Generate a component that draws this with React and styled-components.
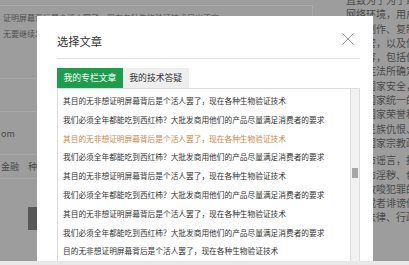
import React from "react";
import styled, { createGlobalStyle } from "styled-components";

const GlobalStyle = createGlobalStyle`
  html, body {
    margin: 0;
    padding: 0;
    background: #e6e6e6;
  }
  body {
    font-family: "Noto Sans CJK SC", "Noto Sans", sans-serif;
  }
`;

const CJK = `"Noto Sans CJK SC", "Noto Sans", sans-serif`;

const articles = [
  { text: "其目的无非想证明屏幕背后是个活人罢了，现在各种生物验证技术" },
  { text: "我们必须全年都能吃到西红柿？大批发商用他们的产品尽量满足消费者的要求" },
  { text: "其目的无非想证明屏幕背后是个活人罢了，现在各种生物验证技术", active: true },
  { text: "我们必须全年都能吃到西红柿？大批发商用他们的产品尽量满足消费者的要求" },
  { text: "其目的无非想证明屏幕背后是个活人罢了，现在各种生物验证技术" },
  { text: "我们必须全年都能吃到西红柿？大批发商用他们的产品尽量满足消费者的要求" },
  { text: "其目的无非想证明屏幕背后是个活人罢了，现在各种生物验证技术" },
  { text: "我们必须全年都能吃到西红柿？大批发商用他们的产品尽量满足消费者的要求" },
  { text: "目的无非想证明屏幕背后是个活人罢了，现在各种生物验证技术" },
];

const sideLines = [
  "直致为了为了避免",
  "网络环境，用户不得",
  "用户制作、复制、发布",
  "和经营，以及传播",
  "的内容，包括但不限于",
  "反对宪法所确定的",
  "危害国家安全，泄露",
  "破坏国家统一的",
  "损害国家荣誉和利益",
  "煽动民族仇恨、民族",
  "破坏国家宗教政策",
];

const sideLines2 = [
  "的散布谣言，扰乱社会",
  "播散布淫秽、色情、赌博",
  "暴力教唆犯罪的",
  "侮辱或者诽谤他人",
  "含有法律、行政法规",
];

function CloseIcon() {
  return (
    <svg width="12" height="12" viewBox="0 0 12 12">
      <path d="M0.5 0.5 L11.5 11.5 M11.5 0.5 L0.5 11.5" stroke="#9a9a9a" strokeWidth="1" fill="none" />
    </svg>
  );
}

export default function App() {
  return (
    <>
      <GlobalStyle />
      <Frame>
        <Stage>
          <Page>
            <LeftCol>
              <NoteBox>
                <NoteLine>证明屏幕背后是个活人罢了，现在各种生物验证技术层出不穷</NoteLine>
                <NoteLine>无要继续发展</NoteLine>
              </NoteBox>
              <Band $h={36} />
              <Band $h={32} />
              <Band $h={42}>
                <BandText>om</BandText>
              </Band>
              <Band $h={23}>
                <BandText>金融　种植</BandText>
              </Band>
              <DarkBlockRow>
                <DarkBlock />
              </DarkBlockRow>
            </LeftCol>
            <SideText>
              <SidePara>
                {sideLines.map((l, i) => (
                  <SideLine key={i}>{l}</SideLine>
                ))}
              </SidePara>
              <SidePara $gap>
                {sideLines2.map((l, i) => (
                  <SideLine key={i}>{l}</SideLine>
                ))}
              </SidePara>
            </SideText>
          </Page>

          <Modal>
            <Header>
              <Title>选择文章</Title>
              <CloseBtn>
                <CloseIcon />
              </CloseBtn>
            </Header>
            <Tabs>
              <Tab $active>我的专栏文章</Tab>
              <Tab>我的技术答疑</Tab>
            </Tabs>
            <ListBox>
              <List>
                {articles.map((a, i) => (
                  <Item key={i} $active={a.active}>
                    {a.text}
                  </Item>
                ))}
              </List>
              <Track>
                <Thumb />
              </Track>
            </ListBox>
          </Modal>
        </Stage>
        <BottomStrip />
      </Frame>
    </>
  );
}

const Frame = styled.div`
  width: 409px;
  height: 265px;
  display: flex;
  flex-direction: column;
  overflow: hidden;
`;

const Stage = styled.div`
  position: relative;
  flex: 1;
  overflow: hidden;
  background: #9d9d9d;
`;

const BottomStrip = styled.div`
  height: 4px;
  background: #e8e8e8;
`;

const Page = styled.div`
  display: grid;
  grid-template-columns: 346px 1fr;
  height: 100%;
`;

const LeftCol = styled.div`
  padding-top: 5px;
`;

const NoteBox = styled.div`
  height: 37px;
  width: 313px;
  padding: 4px 3px 0;
  box-sizing: border-box;
  border-top: 1px solid #a9a9a9;
  border-right: 1px solid #a9a9a9;
`;

const NoteLine = styled.div`
  font-family: ${CJK};
  font-size: 8px;
  line-height: 16px;
  color: #4f4f4f;
  white-space: nowrap;
  overflow: hidden;
`;

const Band = styled.div`
  height: ${(p) => p.$h}px;
  border-bottom: 1px solid #a7a7a7;
  display: flex;
  align-items: center;
`;

const BandText = styled.span`
  font-family: ${CJK};
  font-size: 9px;
  color: #4a4a4a;
  padding-left: 1px;
`;

const DarkBlockRow = styled.div`
  padding: 28px 0 0 28px;
`;

const DarkBlock = styled.div`
  width: 20px;
  height: 23px;
  background: #575757;
`;

const SideText = styled.div`
  margin-top: -7px;
  overflow: hidden;
`;

const SidePara = styled.div`
  margin-top: ${(p) => (p.$gap ? 3 : 0)}px;
`;

const SideLine = styled.div`
  font-family: ${CJK};
  font-size: 10px;
  line-height: 14.3px;
  color: #4a4a4a;
  white-space: nowrap;
`;

const Modal = styled.div`
  position: absolute;
  left: 37px;
  top: 16px;
  width: 336px;
  height: 260px;
  box-sizing: border-box;
  padding: 0 13px 0 20px;
  background: #ffffff;
`;

const Header = styled.div`
  display: flex;
  justify-content: space-between;
  align-items: center;
  padding: 18px 0 10px;
  border-bottom: 1px solid #e3e3e3;
`;

const Title = styled.div`
  font-family: ${CJK};
  font-size: 11.25px;
  line-height: 14px;
  color: #333333;
`;

const CloseBtn = styled.div`
  display: flex;
  margin: -4px 6px 0 0;
`;

const Tabs = styled.div`
  display: flex;
  margin-top: 9px;
`;

const Tab = styled.div`
  height: 20px;
  padding: 0 6.5px;
  font-family: ${CJK};
  font-size: 8.8px;
  line-height: 20px;
  color: ${(p) => (p.$active ? "#ffffff" : "#333333")};
  background: ${(p) => (p.$active ? "#1c9d4c" : "#eeeeee")};
`;

const ListBox = styled.div`
  display: grid;
  grid-template-columns: 1fr 9px;
  height: 200px;
  border: 1px solid #dddddd;
`;

const List = styled.div`
  padding: 3px 0 0 5px;
  overflow: hidden;
`;

const Item = styled.div`
  height: 18.8px;
  line-height: 18.8px;
  font-family: ${CJK};
  font-size: 7.7px;
  color: ${(p) => (p.$active ? "#cc8a45" : "#333333")};
  white-space: nowrap;
`;

const Track = styled.div`
  background: #f1f1f1;
  border-left: 1px solid #e0e0e0;
  padding-top: 79px;
`;

const Thumb = styled.div`
  height: 10px;
  margin: 0 1px;
  background: #a6a6a6;
`;
